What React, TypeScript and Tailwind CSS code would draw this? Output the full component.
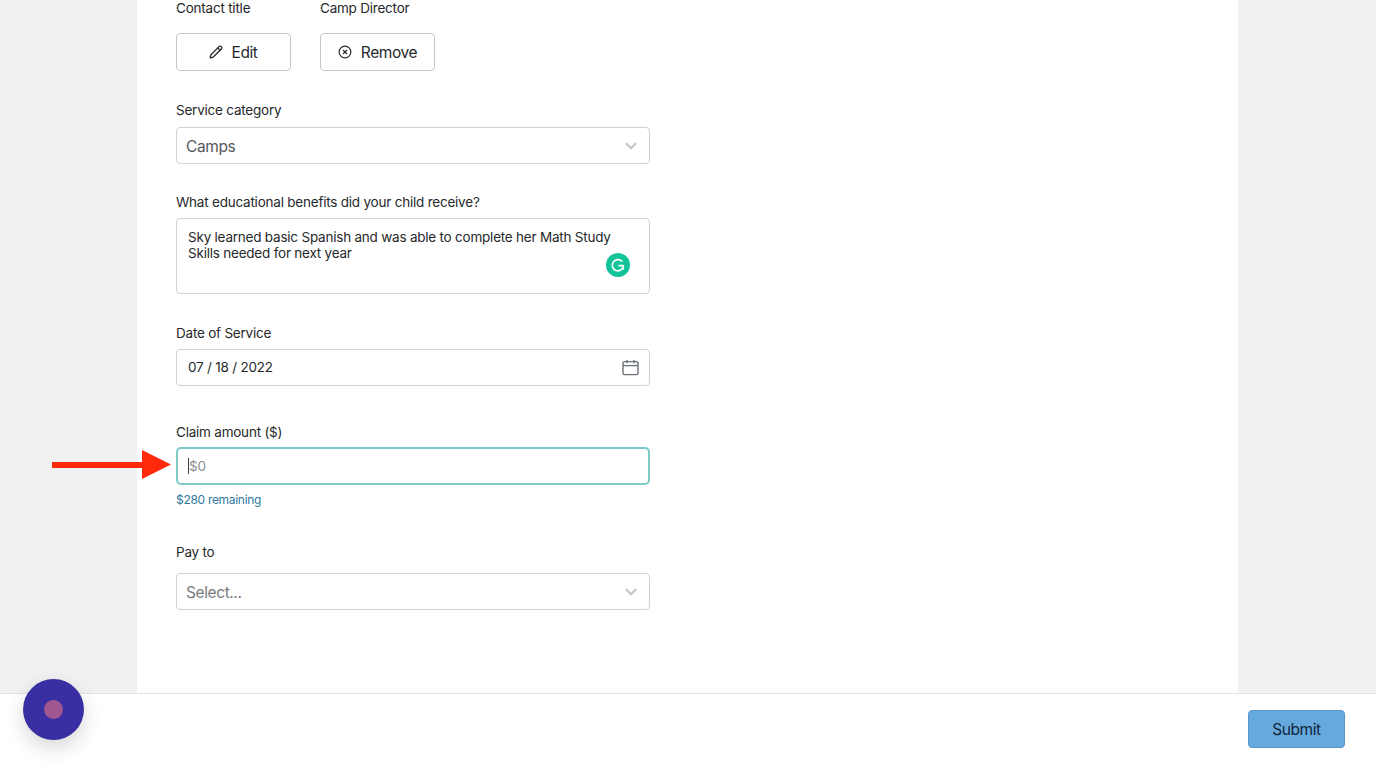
import { Pencil, ChevronDown, CircleX } from "lucide-react";

const font = { fontFamily: "Inter, sans-serif" };

function Label({ children, className = "" }: { children: React.ReactNode; className?: string }) {
  return <div className={`h-[16px] text-[13.5px] leading-[16px] tracking-[-0.22px] text-[#26292b] ${className}`}>{children}</div>;
}

function Select({ value, muted }: { value: string; muted?: boolean }) {
  return (
    <div className="flex h-[37px] w-[474px] items-center justify-between rounded-[4px] border border-[#cfd1d3] bg-white pl-[9px] pr-[9px]">
      <span className={`pt-[2px] text-[15.5px] tracking-[-0.4px] ${muted ? "text-[#777b7e]" : "text-[#54585b]"}`}>{value}</span>
      <ChevronDown size={18} strokeWidth={3} className="text-[#c4c6c8]" />
    </div>
  );
}

function ActionButton({ icon, label, gap }: { icon: React.ReactNode; label: string; gap: string }) {
  return (
    <div className={`flex h-[38px] w-[115px] items-center justify-center rounded-[4px] border border-[#c5c7c9] bg-white text-[15.5px] tracking-[-0.4px] text-[#26292b] ${gap}`}>
      {icon}
      <span className="pt-px">{label}</span>
    </div>
  );
}

export default function App() {
  return (
    <div className="relative flex h-[763px] w-[1376px] flex-col overflow-hidden bg-[#f1f1f1]" style={font}>
      <main className="ml-[137px] h-[693px] w-[1101px] bg-white pl-[39px]">
        <div className="flex gap-[29px]">
          <Label className="w-[115px]">Contact title</Label>
          <Label>Camp Director</Label>
        </div>
        <div className="mt-[17px] flex gap-[29px]">
          <ActionButton gap="gap-[8px]" label="Edit" icon={<Pencil size={14} strokeWidth={2.2} />} />
          <ActionButton gap="gap-[9px]" label="Remove" icon={<CircleX size={14} strokeWidth={2} />} />
        </div>

        <Label className="mt-[31px]">Service category</Label>
        <div className="mt-[9px]"><Select value="Camps" /></div>

        <Label className="mt-[30px]">What educational benefits did your child receive?</Label>
        <div className="relative mt-[8px] h-[76px] w-[474px] whitespace-nowrap rounded-[4px] border border-[#cfd1d3] bg-white px-[11px] pt-[10px] text-[13.5px] leading-[16px] tracking-[-0.22px] text-[#26292b]">
          Sky learned basic Spanish and was able to complete her Math Study
          <br />
          Skills needed for next year
          <div className="absolute left-[429px] top-[34px] flex h-[24px] w-[24px] items-center justify-center rounded-full bg-[#15c39a]">
            <svg width="16" height="16" viewBox="0 0 16 16" fill="none" stroke="white" strokeWidth="1.7" strokeLinecap="round" strokeLinejoin="round">
              <path d="M11.8 4.2A5.6 5.6 0 1 0 13.4 9" />
              <path d="M13.2 8.6H9.2M13.2 8.6v3.4" />
            </svg>
          </div>
        </div>

        <Label className="mt-[31px]">Date of Service</Label>
        <div className="mt-[8px] flex h-[37px] w-[474px] items-center justify-between rounded-[4px] border border-[#cfd1d3] bg-white pl-[11px] pr-[10px] text-[13.5px] tracking-[-0.22px] text-[#26292b]">
          <span>07 / 18 / 2022</span>
          <svg width="17" height="17" viewBox="0 0 17 17" fill="none" stroke="#6b7178" strokeWidth="1.4">
            <rect x="1" y="2.6" width="15" height="13" rx="1.4" />
            <path d="M1 6.6h15M5 1v3.2M12 1v3.2" />
          </svg>
        </div>

        <Label className="mt-[38px]">Claim amount ($)</Label>
        <div className="mt-[7px] flex h-[38px] w-[474px] items-center rounded-[5px] border-2 border-[#7ccbc6] bg-white pl-[10px] text-[13.5px] tracking-[-0.22px] text-[#8b8f92]">
          <span className="h-[16px] w-px bg-[#3b3f42]" />
          <span>$0</span>
        </div>
        <div className="mt-[8px] h-[14px] text-[12px] leading-[14px] tracking-[-0.3px] text-[#2f7a9c]">$280 remaining</div>

        <Label className="mt-[37px]">Pay to</Label>
        <div className="mt-[13px]"><Select value="Select..." muted /></div>
      </main>

      <footer className="flex h-[70px] items-start justify-end border-t border-[#e2e3e4] bg-white pr-[31px] pt-[16px]">
        <div className="flex h-[38px] w-[97px] items-center justify-center rounded-[4px] border border-[#5a94c4] bg-[#66a9de] pt-px text-[15.5px] tracking-[-0.4px] text-[#10253a]">
          Submit
        </div>
      </footer>

      <svg className="absolute left-[52px] top-[449px]" width="120" height="30" viewBox="0 0 120 30">
        <path d="M0 13h90V1l29 14.5L90 30V19H0z" fill="#ff2a0c" />
      </svg>

      <div className="absolute left-[23px] top-[679px] flex h-[61px] w-[61px] items-center justify-center rounded-full bg-[#3a2ea3] shadow-[0_8px_20px_rgba(0,0,0,0.16)]">
        <div className="h-[19px] w-[19px] rounded-full bg-[#a0578f]" />
      </div>
    </div>
  );
}
